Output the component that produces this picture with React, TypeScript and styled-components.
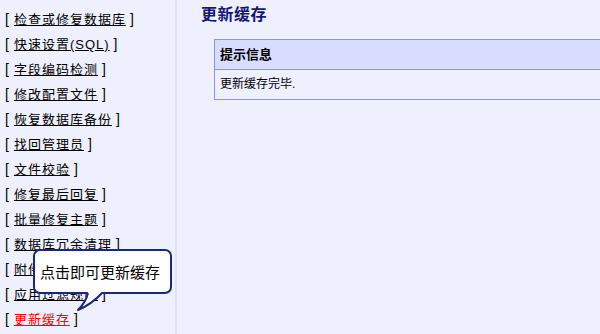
import React from "react";
import styled, { createGlobalStyle } from "styled-components";

const GlobalStyle = createGlobalStyle`
  html, body { margin: 0; padding: 0; }
  body {
    background: #eef0fd;
    font-family: "Liberation Sans", "Noto Sans CJK SC", sans-serif;
    color: #000;
  }
  #root { height: 334px; }
`;

const Page = styled.div`
  position: relative;
  display: flex;
  height: 334px;
  width: 600px;
  overflow: hidden;
  background: #eef0fd;
`;

const Sidebar = styled.ul`
  list-style: none;
  margin: 0;
  padding: 7px 0 0 5px;
  width: 170px;
  flex-shrink: 0;
  border-right: 2px solid #dde0f6;
`;

const Item = styled.li`
  height: 25px;
  line-height: 25px;
  font-size: 13px;
  white-space: nowrap;
`;

const Bracket = styled.span`
  font-size: 14px;
`;

const NavLink = styled.a<{ $active?: boolean }>`
  color: ${(p) => (p.$active ? "#ff0000" : "#000")};
  text-decoration: underline;
  letter-spacing: 1px;
  margin: 0 4px 0 5px;
  cursor: pointer;
`;

const Main = styled.div`
  flex: 1;
  display: flex;
  flex-direction: column;
  padding: 5px 0 0 24px;
  min-width: 0;
`;

const Title = styled.h1`
  margin: 0;
  font-size: 16px;
  line-height: 20px;
  font-weight: bold;
  color: #16167a;
  letter-spacing: 0.5px;
`;

const Box = styled.div`
  margin: 14px -20px 0 13px;
  border: 1px solid #8c90f0;
`;

const BoxHeader = styled.div`
  height: 29px;
  line-height: 29px;
  background: #d8dcfe;
  border-bottom: 1px solid #8c90f0;
  padding-left: 5px;
  font-size: 13px;
  font-weight: bold;
`;

const BoxBody = styled.div`
  height: 29px;
  line-height: 29px;
  padding-left: 5px;
  font-size: 12px;
`;

const Bubble = styled.div`
  position: absolute;
  left: 33px;
  top: 249px;
  width: 130px;
  height: 41px;
  border: 2px solid #1b2680;
  border-radius: 7px;
  background: #fff;
  display: flex;
  align-items: center;
  padding-left: 5px;
  box-sizing: content-box;
  font-size: 15px;
  color: #000;
  white-space: nowrap;
`;

const BubbleText = styled.span`
  width: 125px;
`;

const Tail = styled.svg`
  position: absolute;
  left: 70px;
  top: 288px;
  overflow: visible;
`;

const items = [
  "检查或修复数据库",
  "快速设置(SQL)",
  "字段编码检测",
  "修改配置文件",
  "恢复数据库备份",
  "找回管理员",
  "文件校验",
  "修复最后回复",
  "批量修复主题",
  "数据库冗余清理",
  "附件修复",
  "应用过滤规则",
  "更新缓存",
];

export default function App() {
  return (
    <>
      <GlobalStyle />
      <Page>
        <Sidebar>
          {items.map((t, i) => (
            <Item key={t}>
              <Bracket>[</Bracket>
              <NavLink $active={i === items.length - 1}>{t}</NavLink>
              <Bracket>]</Bracket>
            </Item>
          ))}
        </Sidebar>
        <Main>
          <Title>更新缓存</Title>
          <Box>
            <BoxHeader>提示信息</BoxHeader>
            <BoxBody>更新缓存完毕.</BoxBody>
          </Box>
        </Main>
        <Bubble>
          <BubbleText>点击即可更新缓存</BubbleText>
        </Bubble>
        <Tail width="40" height="30" viewBox="0 0 40 30">
          <path
            d="M 18 4 Q 16 14 8 22 Q 22 16 32 4 Z"
            fill="#fff"
            stroke="none"
          />
          <path
            d="M 18 5 Q 16 14 8 22 Q 22 16 32 5"
            fill="none"
            stroke="#1b2680"
            strokeWidth="2"
            strokeLinejoin="round"
          />
        </Tail>
      </Page>
    </>
  );
}
